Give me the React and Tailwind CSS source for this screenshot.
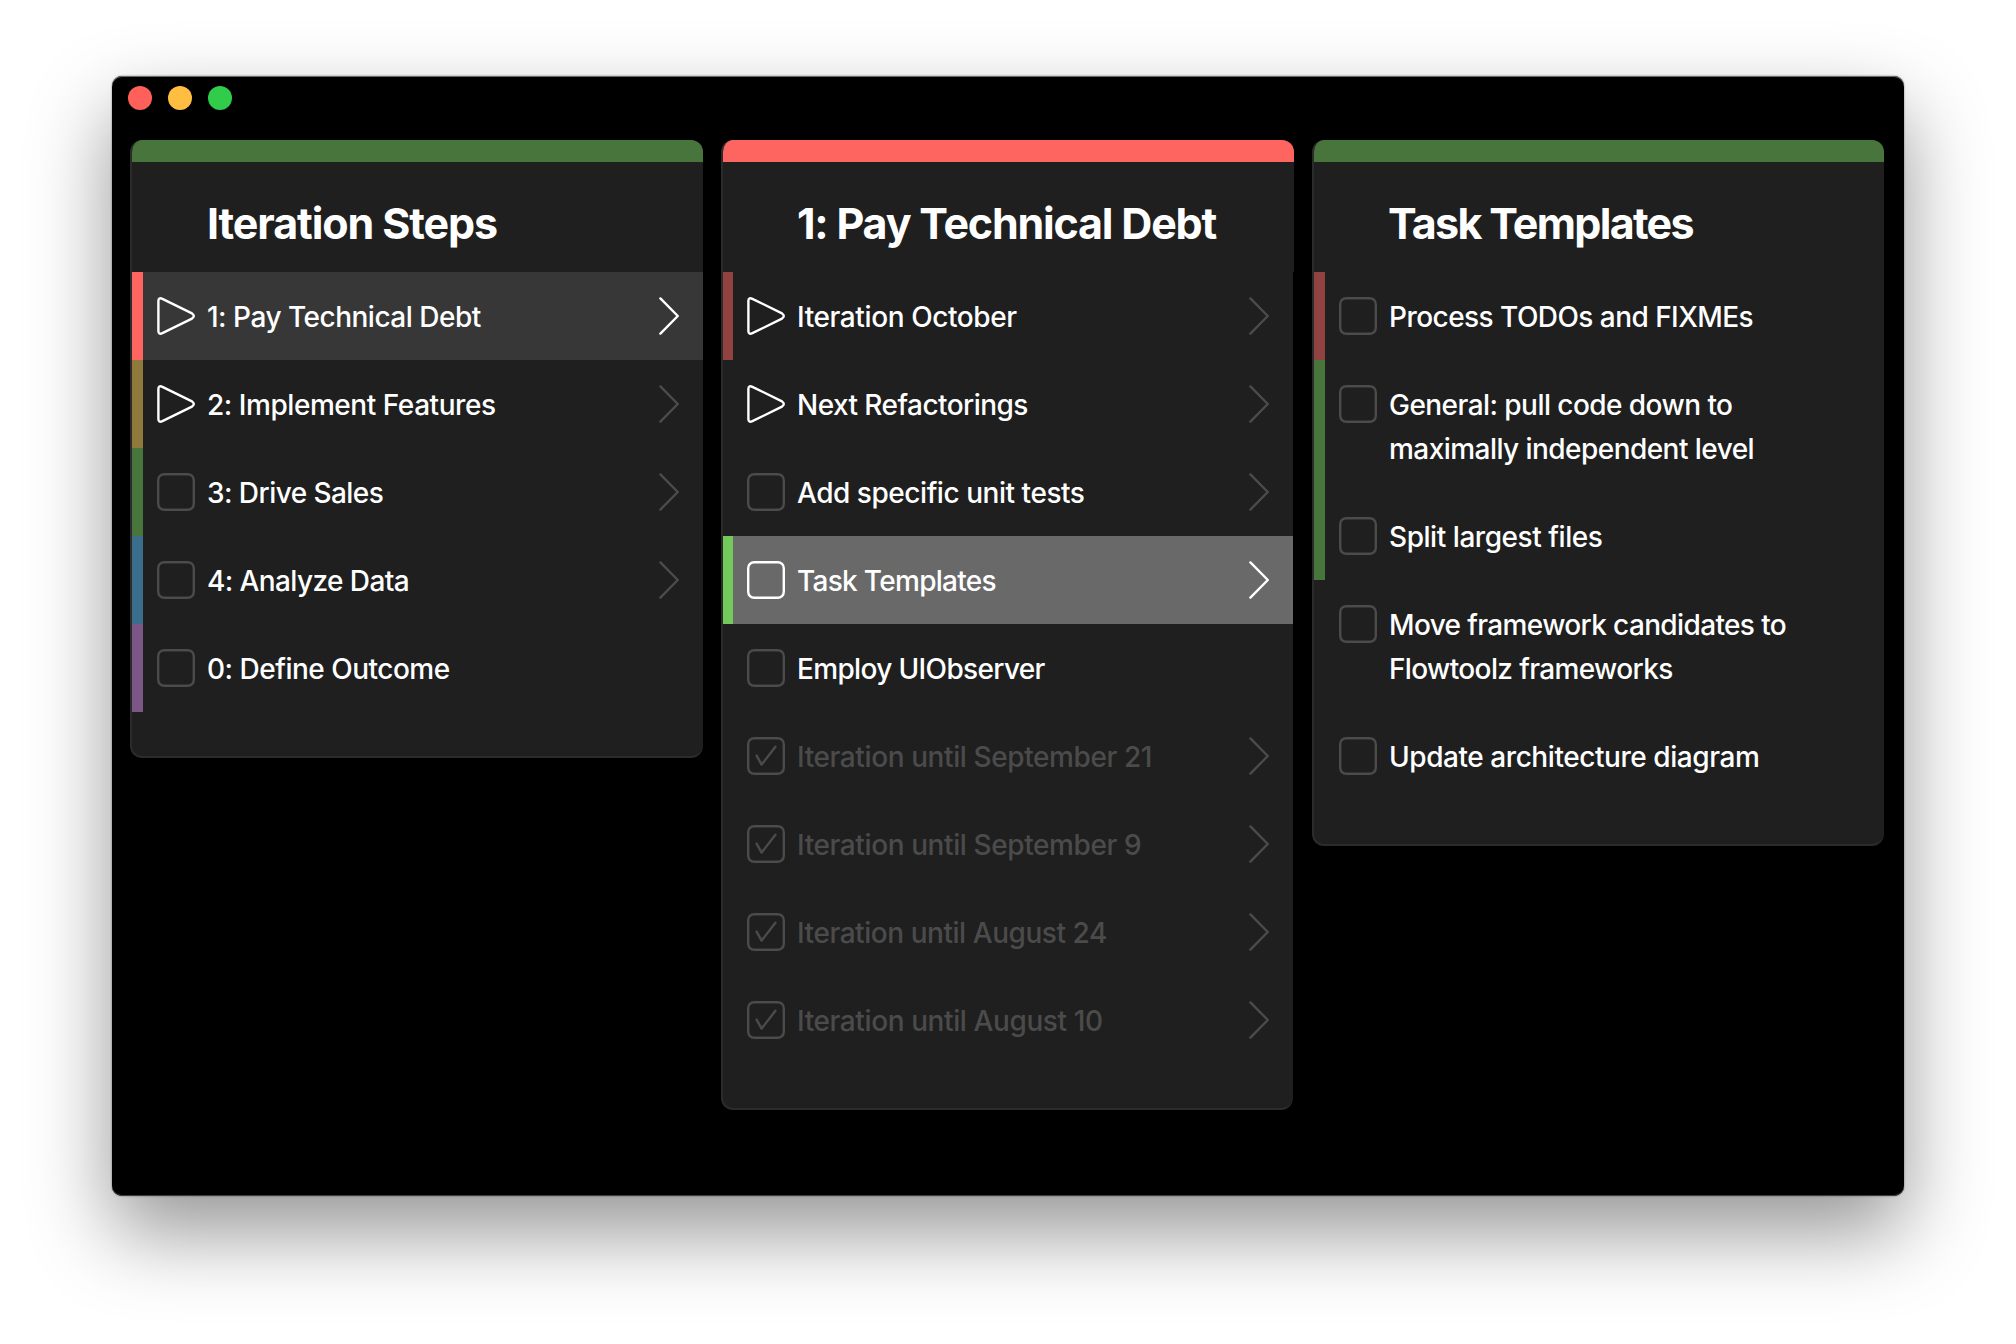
const BAR = {
  red: "bg-[#ff6560]",
  redDim: "bg-[#8f4240]",
  yellow: "bg-[#8f793b]",
  green: "bg-[#48753b]",
  blue: "bg-[#3b6e8c]",
  purple: "bg-[#7c5685]",
  greenBright: "bg-[#73c95a]",
  none: "",
};

const COLUMNS = [
  {
    title: "Iteration Steps",
    titleTracking: "tracking-[-1.1px]",
    titlePad: "pl-[75px]",
    top: "green",
    headWidth: "w-[573px]",
    bodyWidth: "w-[573px]",
    barWidth: "w-[11px]",
    items: [
      { text: ["1: Pay Technical Debt"], icon: "play", bar: "red", state: "selected", chevron: true, tracking: "tracking-[-0.5px]" },
      { text: ["2: Implement Features"], icon: "play", bar: "yellow", chevron: true, tracking: "tracking-[-0.45px]" },
      { text: ["3: Drive Sales"], icon: "box", bar: "green", chevron: true, tracking: "tracking-[-0.55px]" },
      { text: ["4: Analyze Data"], icon: "box", bar: "blue", chevron: true, tracking: "tracking-[-0.6px]" },
      { text: ["0: Define Outcome"], icon: "box", bar: "purple", tracking: "tracking-[-0.5px]" },
    ],
  },
  {
    title: "1: Pay Technical Debt",
    titleTracking: "tracking-[-1.2px]",
    titlePad: "pl-[74px]",
    top: "red",
    headWidth: "w-[573px]",
    bodyWidth: "w-[572px]",
    barWidth: "w-[10px]",
    items: [
      { text: ["Iteration October"], icon: "play", bar: "redDim", chevron: true, tracking: "tracking-[-0.4px]" },
      { text: ["Next Refactorings"], icon: "play", bar: "none", chevron: true, tracking: "tracking-[-0.55px]" },
      { text: ["Add specific unit tests"], icon: "box", bar: "none", chevron: true, tracking: "tracking-[-0.46px]" },
      { text: ["Task Templates"], icon: "box", bar: "greenBright", state: "focused", chevron: true, tracking: "tracking-[-0.7px]" },
      { text: ["Employ UIObserver"], icon: "box", bar: "none", tracking: "tracking-[-0.65px]" },
      { text: ["Iteration until September 21"], icon: "check", bar: "none", state: "done", chevron: true, tracking: "tracking-[-0.4px]" },
      { text: ["Iteration until September 9"], icon: "check", bar: "none", state: "done", chevron: true, tracking: "tracking-[-0.4px]" },
      { text: ["Iteration until August 24"], icon: "check", bar: "none", state: "done", chevron: true, tracking: "tracking-[-0.45px]" },
      { text: ["Iteration until August 10"], icon: "check", bar: "none", state: "done", chevron: true, tracking: "tracking-[-0.4px]" },
    ],
  },
  {
    title: "Task Templates",
    titleTracking: "tracking-[-1.7px]",
    titlePad: "pl-[74px]",
    top: "green",
    headWidth: "w-[572px]",
    bodyWidth: "w-[572px]",
    barWidth: "w-[11px]",
    items: [
      { text: ["Process TODOs and FIXMEs"], icon: "box", bar: "redDim", tracking: "tracking-[-0.55px]" },
      { text: ["General: pull code down to", "maximally independent level"], icon: "box", bar: "green", tracking: "tracking-[-0.55px]" },
      { text: ["Split largest files"], icon: "box", bar: "green", tracking: "tracking-[-0.45px]" },
      { text: ["Move framework candidates to", "Flowtoolz frameworks"], icon: "box", bar: "none", tracking: "tracking-[-0.63px]" },
      { text: ["Update architecture diagram"], icon: "box", bar: "none", tracking: "tracking-[-0.44px]" },
    ],
  },
];

function StateIcon({ kind, bright }) {
  const color = bright || kind === "play" ? "text-white" : "text-[#4b4b4b]";
  return (
    <svg viewBox="0 0 38 38" className={`size-[38px] shrink-0 ${color}`} fill="none" stroke="currentColor" strokeWidth="2.4" strokeLinejoin="round" strokeLinecap="round">
      {kind === "play" ? (
        <path d="M1.4 4 V34 Q1.4 38 5.4 36.2 L35 21.6 Q38.6 19 35 16.4 L5.4 1.8 Q1.4 0 1.4 4 Z" />
      ) : (
        <rect x="1.2" y="1.2" width="35.6" height="35.6" rx="6" />
      )}
      {kind === "check" && <path d="M9.6 18.6 L14.6 27.6 L28.4 9.8" />}
    </svg>
  );
}

function Chevron({ bright }) {
  return (
    <svg viewBox="0 0 20 38" className={`h-[38px] w-5 shrink-0 ${bright ? "text-white" : "text-[#4b4b4b]"}`} fill="none" stroke="currentColor" strokeWidth="2.4" strokeLinejoin="round" strokeLinecap="round">
      <path d="M1.4 1.4 L18.8 19 L1.4 36.6" />
    </svg>
  );
}

function Row({ item, column }) {
  const bright = item.state === "selected" || item.state === "focused";
  const background = item.state === "selected" ? "bg-[#373737]" : item.state === "focused" ? "bg-[#696969]" : "";
  return (
    <li className={`flex ${background}`}>
      <div className={`shrink-0 ${column.barWidth} ${BAR[item.bar]}`} />
      <div className="flex flex-1 items-start pt-[25px] pr-6 pb-[21px] pl-[14px]">
        <StateIcon kind={item.icon} bright={bright} />
        <div className={`-mt-[2px] ml-3 flex-1 text-[28px] leading-[44px] font-[470] whitespace-nowrap ${item.tracking} ${item.state === "done" ? "text-[#4b4b4b]" : "text-white"}`}>
          {item.text.map((line) => (
            <div key={line}>{line}</div>
          ))}
        </div>
        {item.chevron && <Chevron bright={bright} />}
      </div>
    </li>
  );
}

function Column({ column }) {
  return (
    <section className="shrink-0">
      <header className={`h-[132px] overflow-hidden rounded-t-xl border-l-2 border-[#2b2b2b] bg-[#1f1f1f] ${column.headWidth}`}>
        <div className={`h-[22px] ${BAR[column.top]}`} />
        <h2 className={`pt-[34px] text-[43px] leading-[54px] font-bold whitespace-nowrap text-white ${column.titlePad} ${column.titleTracking}`}>{column.title}</h2>
      </header>
      <ul className={`overflow-hidden rounded-b-xl border-b-2 border-l-2 border-[#2b2b2b] bg-[#1f1f1f] pb-[44px] ${column.bodyWidth}`}>
        {column.items.map((item) => (
          <Row key={item.text[0]} item={item} column={column} />
        ))}
      </ul>
    </section>
  );
}

export default function App() {
  return (
    <div className="h-[1344px] w-[2016px] overflow-hidden bg-white px-[112px] pt-[76px] font-['Inter',sans-serif] antialiased">
      <main className="h-[1120px] w-[1792px] rounded-[10px] bg-black shadow-[inset_0_1px_0_#6a6a6a,inset_0_-1px_0_#3c3c3c,0_0_2px_rgba(0,0,0,0.5),0_36px_82px_rgba(0,0,0,0.42)]">
        <div className="flex h-16 gap-4 pt-[10px] pl-4">
          <span className="size-6 rounded-full bg-[#ff6059]" />
          <span className="size-6 rounded-full bg-[#ffbe41]" />
          <span className="size-6 rounded-full bg-[#32cc4b]" />
        </div>
        <div className="flex items-start gap-[18px] pl-[18px]">
          {COLUMNS.map((column) => (
            <Column key={column.title} column={column} />
          ))}
        </div>
      </main>
    </div>
  );
}
